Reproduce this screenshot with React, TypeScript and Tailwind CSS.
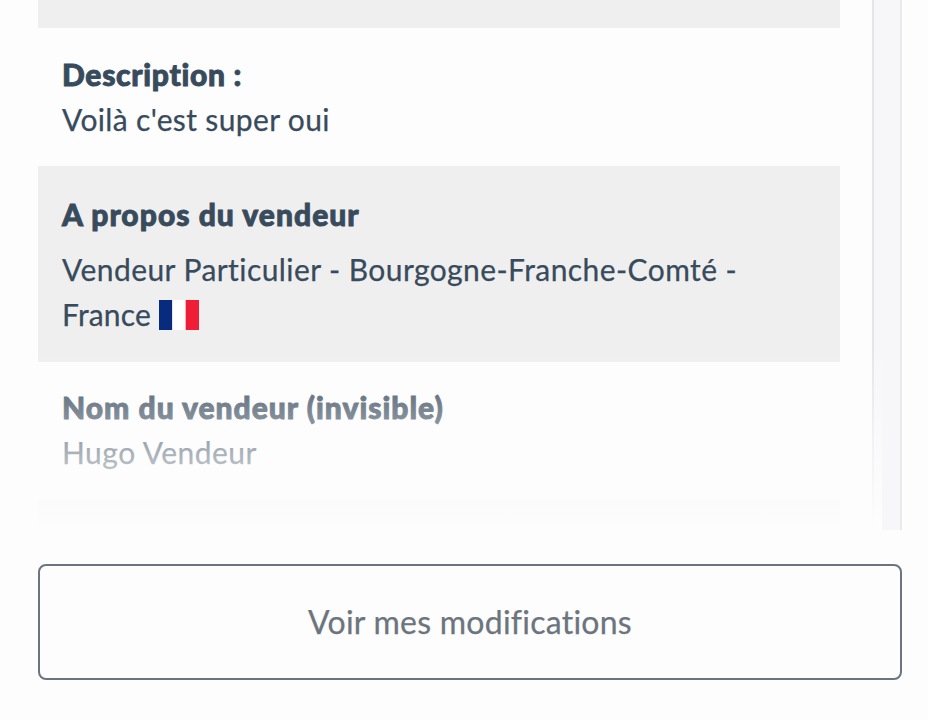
function FrenchFlag() {
  return (
    <svg className="ml-2 inline-block h-[30px] w-10 align-[-4px]" viewBox="0 0 40 30" aria-label="France">
      <rect width="13.33" height="30" fill="#062b7f" />
      <rect x="13.33" width="13.33" height="30" fill="#fff" />
      <rect x="26.67" width="13.33" height="30" fill="#f01d36" />
    </svg>
  );
}

export default function App() {
  return (
    <main className="flex h-[720px] flex-col overflow-hidden bg-[#fdfdfe] pr-[26px] pl-[38px] font-['Lato',sans-serif] text-[30px] leading-[45px] text-[#384b5c] [-webkit-text-stroke:0.25px]">
      <section className="relative h-[530px] shrink-0 overflow-hidden border-r-2 border-[#ebeaeb] bg-[#f7f6f8]">
        <div className="h-full w-[836px] border-r-2 border-[#e6e5e7] bg-[#fdfdfe] whitespace-nowrap">
          <div className="h-7 w-[802px] bg-[#f0eff0]" />
          <div className="h-[138px] w-[802px] p-6">
            <h2 className="font-black tracking-[0.7px] [-webkit-text-stroke:0.9px]">Description :</h2>
            <p className="tracking-[0.36px]">Voilà c'est super oui</p>
          </div>
          <div className="h-[196px] w-[802px] bg-[#f0eff0] px-6 pt-[26px]">
            <h2 className="mb-[10px] font-black tracking-[1.03px] [-webkit-text-stroke:0.9px]">A propos du vendeur</h2>
            <p className="tracking-[0.43px]">Vendeur Particulier - Bourgogne-Franche-Comté -</p>
            <p className="tracking-[0.2px]">
              France
              <FrenchFlag />
            </p>
          </div>
          <div className="h-[138px] w-[802px] px-6 pt-[23px]">
            <h2 className="font-black tracking-[1px] [-webkit-text-stroke:0.9px]">Nom du vendeur (invisible)</h2>
            <p className="tracking-[0.47px]">Hugo Vendeur</p>
          </div>
          <div className="h-[30px] w-[802px] bg-[#f0eff0]" />
        </div>
        <div className="absolute bottom-0 left-0 h-[180px] w-[844px] bg-linear-to-b from-[#fdfdfe]/0 to-[#fdfdfe]" />
      </section>
      <button className="mt-[34px] h-[116px] shrink-0 rounded-lg border-2 border-[#6c757d] pb-0.5 text-[32px] tracking-[0.25px] text-[#6c757d]">
        Voir mes modifications
      </button>
    </main>
  );
}
